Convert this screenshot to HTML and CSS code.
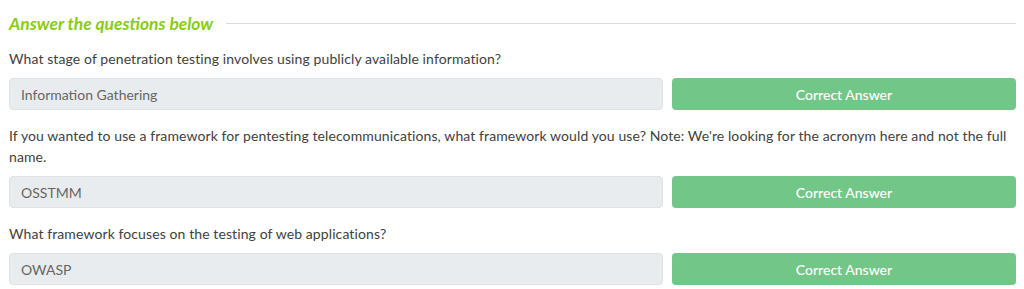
FILE: index.html
```html
<!DOCTYPE html>
<html lang="en">
<head>
	<meta charset="UTF-8">
	<title>Answer the questions below</title>
	<link rel="stylesheet" href="styles.css">
</head>
<body>
	<div class="task">
		<div class="task-title">
			<h4>Answer the questions below</h4>
			<span class="rule"></span>
		</div>

		<div class="question">
			<p>What stage of penetration testing involves using publicly available information?</p>
			<div class="answer-row">
				<input type="text" class="answer" value="Information Gathering" readonly>
				<button class="btn-correct">Correct Answer</button>
			</div>
		</div>

		<div class="question">
			<p>If you wanted to use a framework for pentesting telecommunications, what framework would you use? Note: We're looking for the acronym here and not the full name.</p>
			<div class="answer-row">
				<input type="text" class="answer" value="OSSTMM" readonly>
				<button class="btn-correct">Correct Answer</button>
			</div>
		</div>

		<div class="question">
			<p>What framework focuses on the testing of web applications?</p>
			<div class="answer-row">
				<input type="text" class="answer" value="OWASP" readonly>
				<button class="btn-correct">Correct Answer</button>
			</div>
		</div>
	</div>
</body>
</html>
```
FILE: styles.css
```css
body{
	margin: 0;
	background: #fff;
	font-family: Lato, "Noto Sans", sans-serif;
	font-size: 14px;
	color: #414141;
}

.task{
	padding: 11px 8px 0 9px;
}

.task-title{
	display: flex;
	align-items: center;
	gap: 13px;
	height: 24px;
}

.task-title h4{
	margin: 0;
	font-size: 17.4px;
	font-style: italic;
	font-weight: bold;
	color: #88cc14;
	white-space: nowrap;
}

.task-title .rule{
	flex: 1;
	height: 1px;
	background: #dcdcdc;
}

.question p{
	margin: 13px 0 9px;
	line-height: 21px;
	letter-spacing: 0.1px;
}

.question + .question p{
	margin-top: 15px;
}

.answer-row{
	display: flex;
	gap: 9px;
}

.answer{
	flex: 0 0 654px;
	box-sizing: border-box;
	height: 32px;
	padding: 0 11px;
	border: 1px solid #dfe2e6;
	border-radius: 4px;
	background: #e9ecef;
	color: #666;
	font: inherit;
	outline: none;
}

.btn-correct{
	flex: 1;
	height: 32px;
	border: 0;
	border-radius: 4px;
	background: #72c687;
	color: #fff;
	font: inherit;
	font-weight: 500;
}
```
